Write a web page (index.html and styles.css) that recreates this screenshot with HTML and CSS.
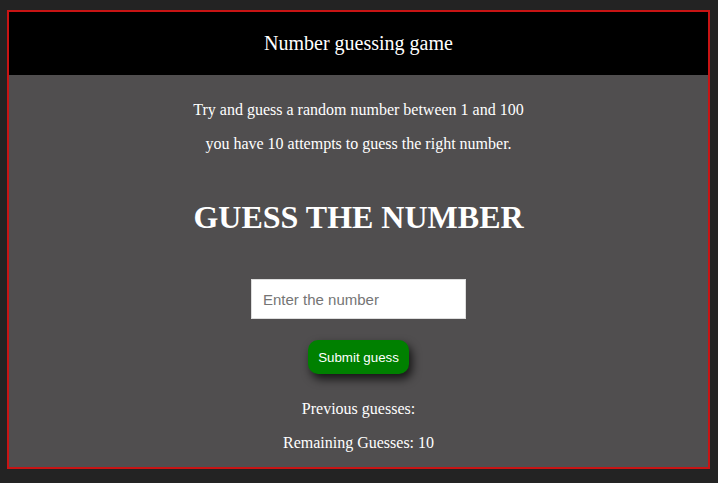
FILE: index.html
```html
<!DOCTYPE html>
<html>
<head>
<meta charset="utf-8">
<link rel="stylesheet" href="styles.css">
</head>
<body>
<div class="game">
  <header class="bar"><span>Number guessing game</span></header>
  <main class="content">
    <p class="intro">Try and guess a random number between 1 and 100</p>
    <p class="intro">you have 10 attempts to guess the right number.</p>
    <h1 class="title">GUESS THE NUMBER</h1>
    <input class="guess" type="text" placeholder="Enter the number">
    <button class="submit">Submit guess</button>
    <p class="status">Previous guesses:</p>
    <p class="status">Remaining Guesses: 10</p>
  </main>
</div>
</body>
</html>
```
FILE: styles.css
```css
html, body {
  background: #232323;
}
body {
  margin: 10px 8px 8px 7px;
  font-family: "Liberation Serif", "Times New Roman", serif;
  color: #fff;
}
.game {
  border: 2px solid #c81414;
  background: #504e4f;
  height: 459px;
  box-sizing: border-box;
  display: flex;
  flex-direction: column;
}
.bar {
  background: #000;
  height: 63px;
  display: flex;
  align-items: center;
  justify-content: center;
  font-size: 20px;
}
.content {
  display: flex;
  flex-direction: column;
  align-items: center;
  padding-top: 18px;
}
.intro {
  margin: 0;
  font-size: 16px;
  line-height: 34px;
}
.title {
  margin: 36px 0 0;
  font-size: 32px;
  line-height: 40px;
  font-weight: bold;
}
.guess {
  margin-top: 42px;
  width: 215px;
  height: 40px;
  box-sizing: border-box;
  border: 1px solid #ddd;
  background: #fff;
  padding: 0 11px;
  font-family: "Liberation Sans", Arial, sans-serif;
  font-size: 15px;
  color: #333;
  outline: none;
}
.guess::placeholder {
  color: #757575;
}
.submit {
  margin-top: 21px;
  width: 101px;
  height: 34px;
  background: #008000;
  color: #fff;
  border: none;
  border-radius: 10px;
  font-family: "Liberation Sans", Arial, sans-serif;
  font-size: 13.333px;
  box-shadow: 3px 5px 10px rgba(0, 0, 0, 0.75);
  padding: 0;
}
.status {
  margin: 0;
  font-size: 16px;
  line-height: 34px;
}
.submit + .status {
  margin-top: 18px;
}
```
